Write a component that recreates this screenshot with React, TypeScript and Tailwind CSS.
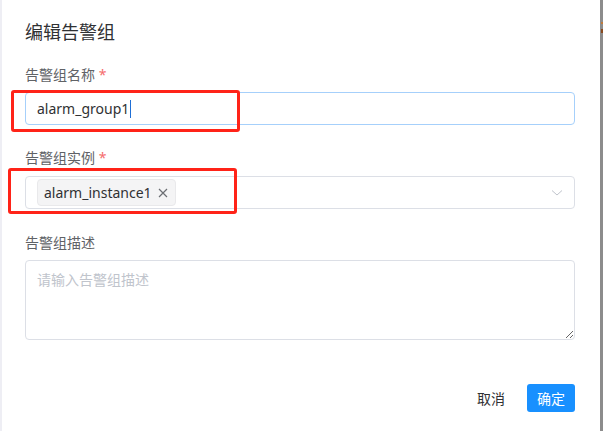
import React from "react";

export default function App() {
  const font = { fontFamily: '"Noto Sans", "Noto Sans CJK SC", sans-serif' };
  return (
    <div className="relative flex h-[431px] w-[603px] overflow-hidden bg-white text-[#303133]" style={font}>
      <div className="w-[2px] shrink-0 bg-[#eeeef4]" />
      <div className="flex flex-1 flex-col pl-[23px] pr-[25px]">
        <div className="mt-[20px] text-[18px] leading-[24px] text-[#303133]">编辑告警组</div>

        <div className="mt-[21px] text-[14px] leading-[20px] text-[#606266]">
          告警组名称 <span className="text-[#f56c6c]">*</span>
        </div>
        <div className="mt-[7px] flex h-[33px] items-center rounded-[4px] border border-[#a6d0fb] px-[11px]">
          <span className="text-[14px] text-[#303133]">alarm_group1</span>
          <span className="ml-[1px] h-[18px] w-[1px] bg-[#1f6fd6]" />
        </div>

        <div className="mt-[23px] text-[14px] leading-[20px] text-[#606266]">
          告警组实例 <span className="text-[#f56c6c]">*</span>
        </div>
        <div className="mt-[8px] flex h-[33px] items-center justify-between rounded-[4px] border border-[#dcdfe6] pl-[11px] pr-[11px]">
          <div className="flex h-[27px] items-center gap-[6px] rounded-[4px] border border-[#e9e9eb] bg-[#f4f4f5] pl-[6px] pr-[7px]">
            <span className="text-[14px] text-[#303133]">alarm_instance1</span>
            <svg width="10" height="10" viewBox="0 0 10 10" className="text-[#6b6e73]">
              <path d="M1 1L9 9M9 1L1 9" stroke="currentColor" strokeWidth="1.2" />
            </svg>
          </div>
          <svg width="12" height="8" viewBox="0 0 12 8" className="text-[#c0c4cc]">
            <path d="M1 1.5L6 6L11 1.5" fill="none" stroke="currentColor" strokeWidth="1" />
          </svg>
        </div>

        <div className="mt-[24px] text-[14px] leading-[20px] text-[#606266]">告警组描述</div>
        <textarea
          className="mt-[7px] h-[80px] w-full rounded-[4px] border border-[#dcdfe6] px-[11px] py-[8px] text-[14px] leading-[22px] text-[#303133] outline-none placeholder:text-[#c0c4cc]"
          placeholder="请输入告警组描述"
          readOnly
        />

        <div className="mt-[44px] flex items-center justify-end gap-[22px]">
          <span className="text-[14px] text-[#303133]">取消</span>
          <div className="flex h-[28px] w-[48px] items-center justify-center rounded-[3px] bg-[#1890ff] text-[14px] text-white">
            确定
          </div>
        </div>
      </div>
      <div className="relative w-[3px] shrink-0 bg-[#8c8c8c]">
        <span className="absolute left-[1px] top-[22px] h-[2px] w-[2px] bg-[#c07a3a]" />
        <span className="absolute left-[1px] top-[29px] h-[4px] w-[2px] bg-[#8a4a1e]" />
      </div>

      <div className="pointer-events-none absolute left-[11px] top-[90px] h-[42px] w-[229px] rounded-[3px] border-[3px] border-[#ff2318]" />
      <div className="pointer-events-none absolute left-[8px] top-[168px] h-[46px] w-[229px] rounded-[3px] border-[3px] border-[#ff2318]" />
    </div>
  );
}
